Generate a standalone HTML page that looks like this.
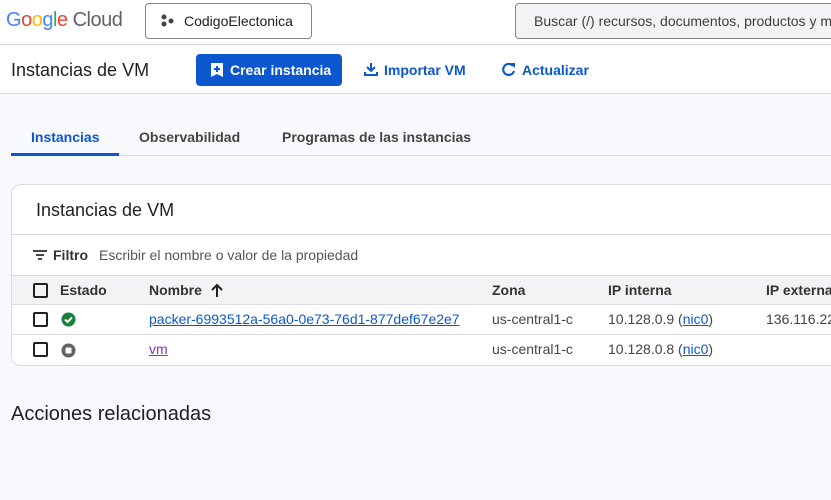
<!DOCTYPE html>
<html><head><meta charset="utf-8"><style>
*{margin:0;padding:0;box-sizing:border-box}
body{width:831px;height:500px;overflow:hidden;background:#f8f9fc;font-family:"Liberation Sans",Arial,sans-serif;color:#202124;position:relative}
.a{position:absolute;white-space:nowrap}
.cb{position:absolute;width:15px;height:15px;border:2px solid #202124;border-radius:2px}
</style></head><body>
<div class="a" style="left:0;top:0;width:831px;height:45px;background:#fff;border-bottom:1px solid #dadce0"></div>
<div class="a" style="left:6px;top:9px;font-size:20px;letter-spacing:-0.5px"><span style="color:#4285f4">G</span><span style="color:#ea4335">o</span><span style="color:#fbbc04">o</span><span style="color:#4285f4">g</span><span style="color:#34a853">l</span><span style="color:#ea4335">e</span> <span style="color:#5f6368">Cloud</span></div>
<div class="a" style="left:145px;top:3px;width:167px;height:36px;border:1px solid #80868b;border-radius:4px;background:#fff"></div>
<svg class="a" style="left:160px;top:14px" width="14" height="14"><circle cx="4" cy="3" r="2.5" fill="#444"/><circle cx="4" cy="10" r="2.5" fill="#444"/><circle cx="11" cy="7" r="2.5" fill="#444"/></svg>
<div class="a" style="left:184px;top:13px;font-size:14px">CodigoElectonica</div>
<div class="a" style="left:515px;top:3px;width:330px;height:36px;border:1px solid #80868b;border-radius:4px;background:#f1f3f4"></div>
<div class="a" style="left:534px;top:13px;font-size:14px;color:#3c4043">Buscar (/) recursos, documentos, productos y m</div>
<div class="a" style="left:0;top:46px;width:831px;height:48px;background:#fff;border-bottom:1px solid #dadce0"></div>
<div class="a" style="left:11px;top:60px;font-size:18px">Instancias de VM</div>
<div class="a" style="left:196px;top:54px;width:146px;height:32px;background:#0b57d0;border-radius:4px"></div>
<svg class="a" style="left:210px;top:62px" width="14" height="16"><path d="M1 1h12v14l-6-3-6 3z" fill="#fff"/><path d="M7 4v6M4 7h6" stroke="#0b57d0" stroke-width="2"/></svg>
<div class="a" style="left:230px;top:62px;font-size:14px;color:#fff;font-weight:bold">Crear instancia</div>
<svg class="a" style="left:364px;top:62px" width="14" height="14"><path d="M7 1v8M3 5l4 4 4-4M1 10v3h12v-3" stroke="#0b57d0" stroke-width="2" fill="none"/></svg>
<div class="a" style="left:384px;top:62px;font-size:14px;color:#0b57d0;font-weight:bold">Importar VM</div>
<svg class="a" style="left:501px;top:62px" width="15" height="15"><path d="M12 4A5.5 5.5 0 1 0 13 9" stroke="#0b57d0" stroke-width="2.2" fill="none"/><path d="M9 1h5v5z" fill="#0b57d0"/></svg>
<div class="a" style="left:522px;top:62px;font-size:14px;color:#0b57d0;font-weight:bold">Actualizar</div>
<div class="a" style="left:31px;top:129px;font-size:14px;color:#0b57d0;font-weight:bold">Instancias</div>
<div class="a" style="left:139px;top:129px;font-size:14px;color:#444;font-weight:bold">Observabilidad</div>
<div class="a" style="left:282px;top:129px;font-size:14px;color:#444;font-weight:bold">Programas de las instancias</div>
<div class="a" style="left:11px;top:155px;width:820px;height:1px;background:#dadce0"></div>
<div class="a" style="left:11px;top:153px;width:108px;height:3px;background:#0b57d0"></div>
<div class="a" style="left:11px;top:184px;width:840px;height:182px;background:#fff;border:1px solid #dadce0;border-radius:10px"></div>
<div class="a" style="left:36px;top:200px;font-size:18px">Instancias de VM</div>
<div class="a" style="left:12px;top:234px;width:819px;height:1px;background:#dadce0"></div>
<svg class="a" style="left:33px;top:249px" width="14" height="12"><path d="M0 2h14M3 6h8M5 10h4" stroke="#444" stroke-width="2"/></svg>
<div class="a" style="left:53px;top:247px;font-size:14px;font-weight:bold;color:#333">Filtro</div>
<div class="a" style="left:99px;top:247px;font-size:14px;color:#555">Escribir el nombre o valor de la propiedad</div>
<div class="a" style="left:12px;top:275px;width:819px;height:30px;background:#f1f3f4;border-top:1px solid #dadce0;border-bottom:1px solid #dadce0"></div>
<div class="cb" style="left:33px;top:283px"></div>
<div class="a" style="left:60px;top:282px;font-size:14px;font-weight:bold;color:#333">Estado</div>
<div class="a" style="left:149px;top:282px;font-size:14px;font-weight:bold;color:#333">Nombre</div>
<svg class="a" style="left:210px;top:283px" width="14" height="14"><path d="M7 14V2M2 7l5-5 5 5" stroke="#202124" stroke-width="2" fill="none"/></svg>
<div class="a" style="left:492px;top:282px;font-size:14px;font-weight:bold;color:#333">Zona</div>
<div class="a" style="left:608px;top:282px;font-size:14px;font-weight:bold;color:#333">IP interna</div>
<div class="a" style="left:766px;top:282px;font-size:14px;font-weight:bold;color:#333">IP externa</div>
<div class="cb" style="left:33px;top:312px"></div>
<svg class="a" style="left:61px;top:312px" width="15" height="15"><circle cx="7.5" cy="7.5" r="7" fill="#188038"/><path d="M4 7.5l2.5 2.5 4.5-4.5" stroke="#fff" stroke-width="2" fill="none"/></svg>
<div class="a" style="left:149px;top:311px;font-size:14px;color:#0b57d0;text-decoration:underline">packer-6993512a-56a0-0e73-76d1-877def67e2e7</div>
<div class="a" style="left:492px;top:311px;font-size:14px;color:#444">us-central1-c</div>
<div class="a" style="left:608px;top:311px;font-size:14px;color:#444">10.128.0.9 (<span style="color:#0b57d0;text-decoration:underline">nic0</span>)</div>
<div class="a" style="left:766px;top:311px;font-size:14px;color:#444">136.116.224</div>
<div class="a" style="left:12px;top:334px;width:819px;height:1px;background:#dadce0"></div>
<div class="cb" style="left:33px;top:342px"></div>
<svg class="a" style="left:61px;top:343px" width="15" height="15"><circle cx="7.5" cy="7.5" r="7" fill="#5f6368"/><rect x="4.5" y="4.5" width="6" height="6" rx="1" fill="#fff"/></svg>
<div class="a" style="left:149px;top:341px;font-size:14px;color:#8430ce;text-decoration:underline">vm</div>
<div class="a" style="left:492px;top:341px;font-size:14px;color:#444">us-central1-c</div>
<div class="a" style="left:608px;top:341px;font-size:14px;color:#444">10.128.0.8 (<span style="color:#0b57d0;text-decoration:underline">nic0</span>)</div>
<div class="a" style="left:11px;top:403px;font-size:20px">Acciones relacionadas</div>
</body></html>
